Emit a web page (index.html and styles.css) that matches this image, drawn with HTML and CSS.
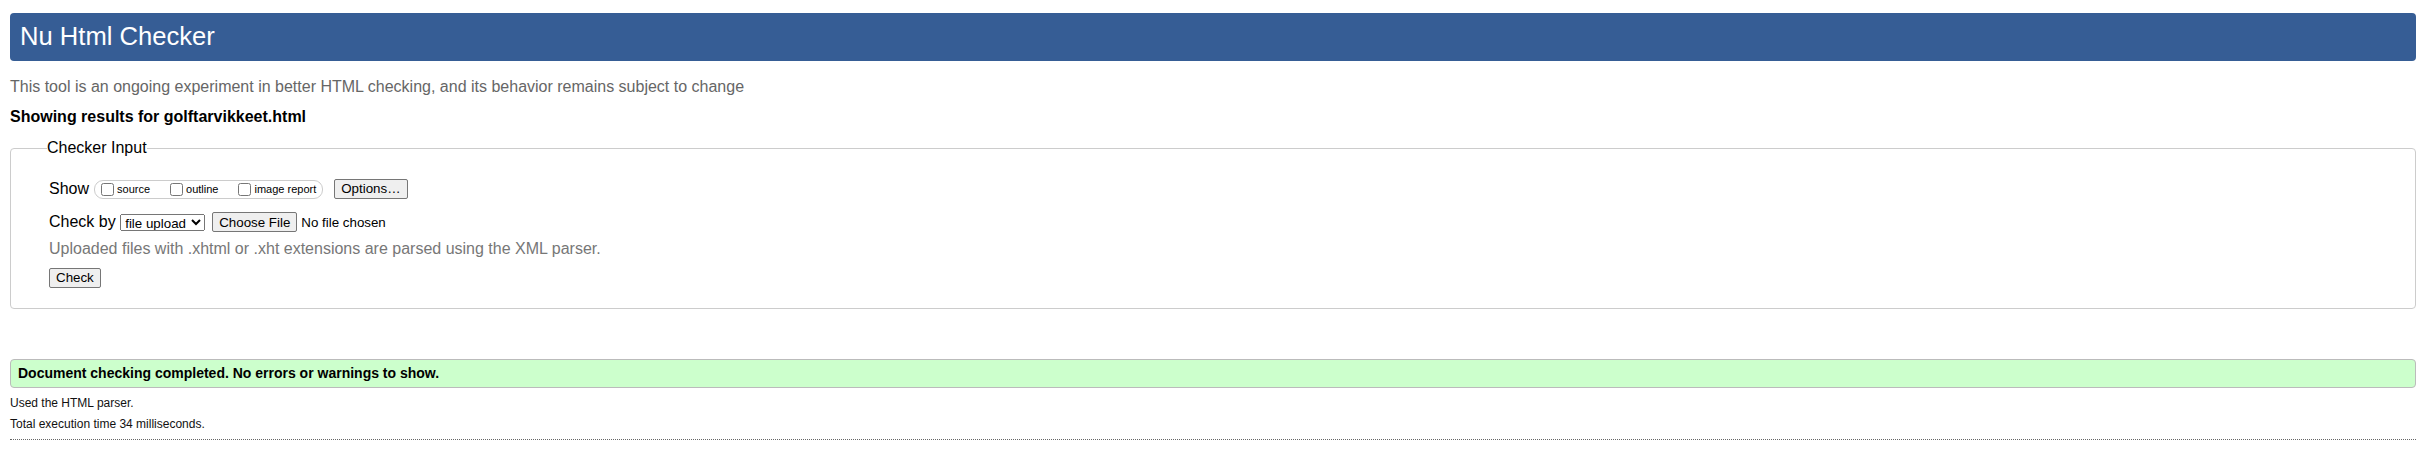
FILE: index.html
```html
<!DOCTYPE html>
<html lang="en">
<head>
<meta charset="utf-8">
<title>Showing results for golftarvikkeet.html - Nu Html Checker</title>
<link rel="stylesheet" href="styles.css">
</head>
<body>
<h1 class="title">Nu Html Checker</h1>
<p class="intro">This tool is an ongoing experiment in better HTML checking, and its behavior remains subject to change</p>
<p class="showing">Showing results for golftarvikkeet.html</p>
<form class="checker-form">
<fieldset class="checker">
<legend class="checker-legend">Checker Input</legend>
<div class="row">
<span class="row-label">Show</span>
<span class="show-group">
<label class="show-opt"><input type="checkbox" class="cb">source</label>
<label class="show-opt"><input type="checkbox" class="cb">outline</label>
<label class="show-opt last"><input type="checkbox" class="cb">image report</label>
</span>
<button type="button" class="btn options-btn">Options…</button>
</div>
<div class="row row-check">
<span class="row-label">Check by</span>
<select class="by-select"><option>file upload</option></select>
<input type="file" class="file-input">
</div>
<p class="note">Uploaded files with .xhtml or .xht extensions are parsed using the XML parser.</p>
<div class="submit-row"><button type="button" class="btn">Check</button></div>
</fieldset>
</form>
<p class="success">Document checking completed. No errors or warnings to show.</p>
<p class="details">Used the HTML parser.</p>
<p class="details second">Total execution time 34 milliseconds.</p>
<hr class="end-rule">
</body>
</html>
```
FILE: styles.css
```css
html, body {
  margin: 0;
  background: #fff;
  color: #000;
  font-family: "Liberation Sans", Arial, sans-serif;
  font-size: 16px;
}
body {
  padding: 13px 9px 0 10px;
}
.title {
  margin: 0;
  height: 29px;
  padding: 9px 10px 10px;
  line-height: 29px;
  font-size: 25.6px;
  font-weight: normal;
  color: #fff;
  background: #365d95;
  border-radius: 4px;
}
.intro {
  margin: 17px 0 0;
  line-height: 18px;
  color: #666;
}
.showing {
  margin: 12px 0 0;
  line-height: 18px;
  font-weight: bold;
}
.checker-form {
  margin: 13px 0 0;
}
.checker {
  margin: 0;
  padding: 21px 20px 20px 38px;
  border: 1px solid #ccc;
  border-radius: 4px;
}
.checker-legend {
  padding: 0;
  margin-left: -2px;
  line-height: 18px;
}
.row {
  display: flex;
  align-items: center;
  height: 22px;
  line-height: 18px;
}
.row-check {
  margin-top: 11px;
}
.show-group {
  display: flex;
  align-items: center;
  margin-left: 5px;
  height: 17px;
  padding: 0 6px 0 2px;
  border: 1px solid #ccc;
  border-radius: 9px;
  font-size: 11px;
  line-height: 13px;
}
.show-opt {
  display: flex;
  align-items: center;
  margin-right: 16px;
}
.show-opt.last {
  margin-right: 0;
}
.cb {
  width: 13px;
  height: 13px;
  margin: 2px 3px 2px 4px;
}
.btn {
  font-family: "Liberation Sans", Arial, sans-serif;
  font-size: 13.333px;
  line-height: 16px;
  height: 20px;
  padding: 0 6px;
  color: #000;
  background: #efefef;
  border: 1px solid #767676;
  border-radius: 2px;
}
.options-btn {
  margin-left: 11px;
}
.by-select {
  margin-left: 4.5px;
  width: 85px;
  height: 17px;
  font-family: "Liberation Sans", Arial, sans-serif;
  font-size: 13.333px;
}
.file-input {
  margin-left: 7px;
  font-family: "Liberation Sans", Arial, sans-serif;
  font-size: 13.333px;
}
.file-input::file-selector-button {
  font-family: "Liberation Sans", Arial, sans-serif;
  font-size: 13.333px;
  height: 20px;
  padding: 0 6px;
  background: #efefef;
  border: 1px solid #767676;
  border-radius: 2px;
  margin-right: 4px;
}
.note {
  margin: 7px 0 0;
  line-height: 18px;
  color: #777;
}
.submit-row {
  margin-top: 10px;
  height: 20px;
  display: flex;
}
.success {
  margin: 50px 0 0;
  padding: 5px 7px;
  line-height: 17px;
  font-size: 14px;
  font-weight: bold;
  background: #ccffcc;
  border: 1px solid #bbb;
  border-radius: 4px;
}
.details {
  margin: 8px 0 0;
  font-size: 12px;
  line-height: 14px;
  color: #111;
}
.details.second {
  margin-top: 7px;
}
.end-rule {
  margin: 8px 0 0;
  height: 0;
  border: 0;
  border-top: 1px dotted #666;
}
```
